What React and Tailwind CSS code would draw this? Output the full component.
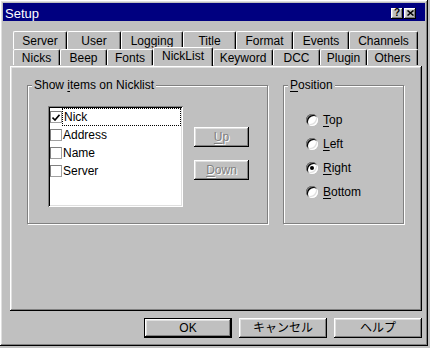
import React from 'react';

const raised = 'shadow-[inset_-1px_-1px_0_#000,inset_1px_1px_0_#fff,inset_-2px_-2px_0_#808080,inset_2px_2px_0_#dfdfdf]';

const backRow = [
    { label: 'Server', w: 'w-[54px]' },
    { label: 'User', w: 'w-[54px]' },
    { label: 'Logging', w: 'w-[62px]' },
    { label: 'Title', w: 'w-[53px]' },
    { label: 'Format', w: 'w-[57px]' },
    { label: 'Events', w: 'w-[56px]' },
    { label: 'Channels', w: 'w-[69px]' },
];

const frontRow = [
    { label: 'Nicks', w: 'w-[47px]' },
    { label: 'Beep', w: 'w-[47px]' },
    { label: 'Fonts', w: 'w-[46px]' },
    { label: 'NickList', w: 'w-[60px]', selected: true },
    { label: 'Keyword', w: 'w-[60px]' },
    { label: 'DCC', w: 'w-[47px]' },
    { label: 'Plugin', w: 'w-[47px]' },
    { label: 'Others', w: 'w-[51px]' },
];

const items = [
    { label: 'Nick', checked: true, focus: true },
    { label: 'Address' },
    { label: 'Name' },
    { label: 'Server' },
];

const positions = [
    { pre: '', key: 'T', rest: 'op' },
    { pre: '', key: 'L', rest: 'eft' },
    { pre: '', key: 'R', rest: 'ight', on: true },
    { pre: '', key: 'B', rest: 'ottom' },
];

const Tab = ({ label, w, selected, tall }) => (
    <div
        className={`${w} ${selected ? 'relative z-10 -mt-[2px] h-[19px] pb-[2px]' : tall ? 'h-[18px]' : 'h-[16px]'} shrink-0 flex items-center justify-center bg-[#c0c0c0] border-t border-l border-white border-r border-r-black rounded-t-[2px] shadow-[inset_-1px_0_0_#808080]`}
    >
        {label}
    </div>
);

const GroupBox = ({ title, className, children }) => (
    <div className={`relative border border-[#808080] shadow-[inset_1px_1px_0_#fff,1px_1px_0_#fff] ${className}`}>
        <span className="absolute -top-[9px] left-[4px] px-[2px] bg-[#c0c0c0] leading-[16px]">{title}</span>
        {children}
    </div>
);

const Check = ({ checked }) => (
    <div className="w-[12px] h-[12px] shrink-0 bg-white border border-t-[#808080] border-l-[#808080] border-r-[#a0a0a0] border-b-[#a0a0a0] flex items-center justify-center">
        {checked && (
            <svg width="8" height="7" viewBox="0 0 8 7">
                <path d="M0.5 3.5 L3 6 L7.5 0.8" stroke="#000" strokeWidth="1.6" fill="none" />
            </svg>
        )}
    </div>
);

const Radio = ({ on }) => (
    <div className="w-[12px] h-[12px] shrink-0 rounded-full bg-white shadow-[inset_1px_1px_0_#808080,inset_-1px_-1px_0_#fff,inset_2px_2px_0_#000,inset_-2px_-2px_0_#dfdfdf] flex items-center justify-center">
        {on && <div className="w-[4px] h-[4px] rounded-full bg-black" />}
    </div>
);

const App = () => {
    return (
        <div className="w-[430px] h-[348px] bg-[#c0c0c0] font-['Liberation_Sans','Noto_Sans_CJK_JP',sans-serif] text-[12px] text-black">
            <div className={`w-[428px] h-[346px] bg-[#c0c0c0] p-[3px] ${raised}`}>
                {/* Title bar */}
                <div className="h-[18px] bg-[#000080] flex items-center pt-[2px] pl-[2px] pr-[9px]">
                    <span className="text-white text-[13px] leading-none">Setup</span>
                    <div className="ml-auto flex gap-[1px]">
                        <div className={`w-[12px] h-[11px] bg-[#c0c0c0] ${raised} flex items-center justify-center text-[10px] font-bold leading-none pb-[1px]`}>?</div>
                        <div className={`w-[12px] h-[11px] bg-[#c0c0c0] ${raised} flex items-center justify-center`}>
                            <svg width="7" height="6" viewBox="0 0 7 6">
                                <path d="M0.5 0.5 L6.5 5.5 M6.5 0.5 L0.5 5.5" stroke="#000" strokeWidth="1.5" />
                            </svg>
                        </div>
                    </div>
                </div>

                <div className="pt-[10px] pl-[7px]">
                    {/* Tabs */}
                    <div className="flex ml-[3px] w-[405px]">
                        {backRow.map(t => <Tab key={t.label} {...t} tall />)}
                    </div>
                    <div className="flex ml-[3px] w-[405px]">
                        {frontRow.map(t => <Tab key={t.label} {...t} />)}
                    </div>

                    {/* Panel */}
                    <div className={`w-[412px] h-[245px] ${raised} flex items-start pl-[17px] pt-[19px] gap-[15px]`}>
                        <GroupBox title={<>Show <u className="underline-offset-2">i</u>tems on Nicklist</>} className="w-[241px] h-[139px] flex items-start pl-[20px] pt-[20px]">
                            <div className="w-[135px] h-[101px] bg-white p-[2px] shadow-[inset_1px_1px_0_#808080,inset_-1px_-1px_0_#fff,inset_2px_2px_0_#000,inset_-2px_-2px_0_#dfdfdf]">
                                {items.map(it => (
                                    <div key={it.label} className="h-[18px] flex items-center">
                                        <Check checked={it.checked} />
                                        <span className={`flex-1 h-[18px] flex items-center pl-[1px] ${it.focus ? 'border border-dotted border-black pl-0' : ''}`}>{it.label}</span>
                                    </div>
                                ))}
                            </div>
                            <div className="ml-[11px] mt-[21px] flex flex-col gap-[13px]">
                                <div className={`w-[55px] h-[20px] ${raised} flex items-center justify-center text-[#808080] [text-shadow:1px_1px_0_#fff]`}>
                                    <span><u className="underline-offset-2">U</u>p</span>
                                </div>
                                <div className={`w-[55px] h-[20px] ${raised} flex items-center justify-center text-[#808080] [text-shadow:1px_1px_0_#fff]`}>
                                    <span><u className="underline-offset-2">D</u>own</span>
                                </div>
                            </div>
                        </GroupBox>

                        <GroupBox title={<><u className="underline-offset-2">P</u>osition</>} className="w-[121px] h-[139px] flex flex-col pl-[22px] pt-[26px] gap-[8px]">
                            {positions.map(p => (
                                <div key={p.key} className="h-[16px] flex items-center gap-[5px]">
                                    <Radio on={p.on} />
                                    <span><u className="underline-offset-2">{p.key}</u>{p.rest}</span>
                                </div>
                            ))}
                        </GroupBox>
                    </div>

                    {/* Dialog buttons */}
                    <div className="w-[412px] mt-[7px] flex justify-end gap-[7px]">
                        <div className={`w-[88px] h-[20px] border border-black ${raised} flex items-center justify-center`}>OK</div>
                        <div className={`w-[88px] h-[20px] ${raised} flex items-center justify-center`}>キャンセル</div>
                        <div className={`w-[88px] h-[20px] ${raised} flex items-center justify-center`}>ヘルプ</div>
                    </div>
                </div>
            </div>
        </div>
    );
};

export default App;
